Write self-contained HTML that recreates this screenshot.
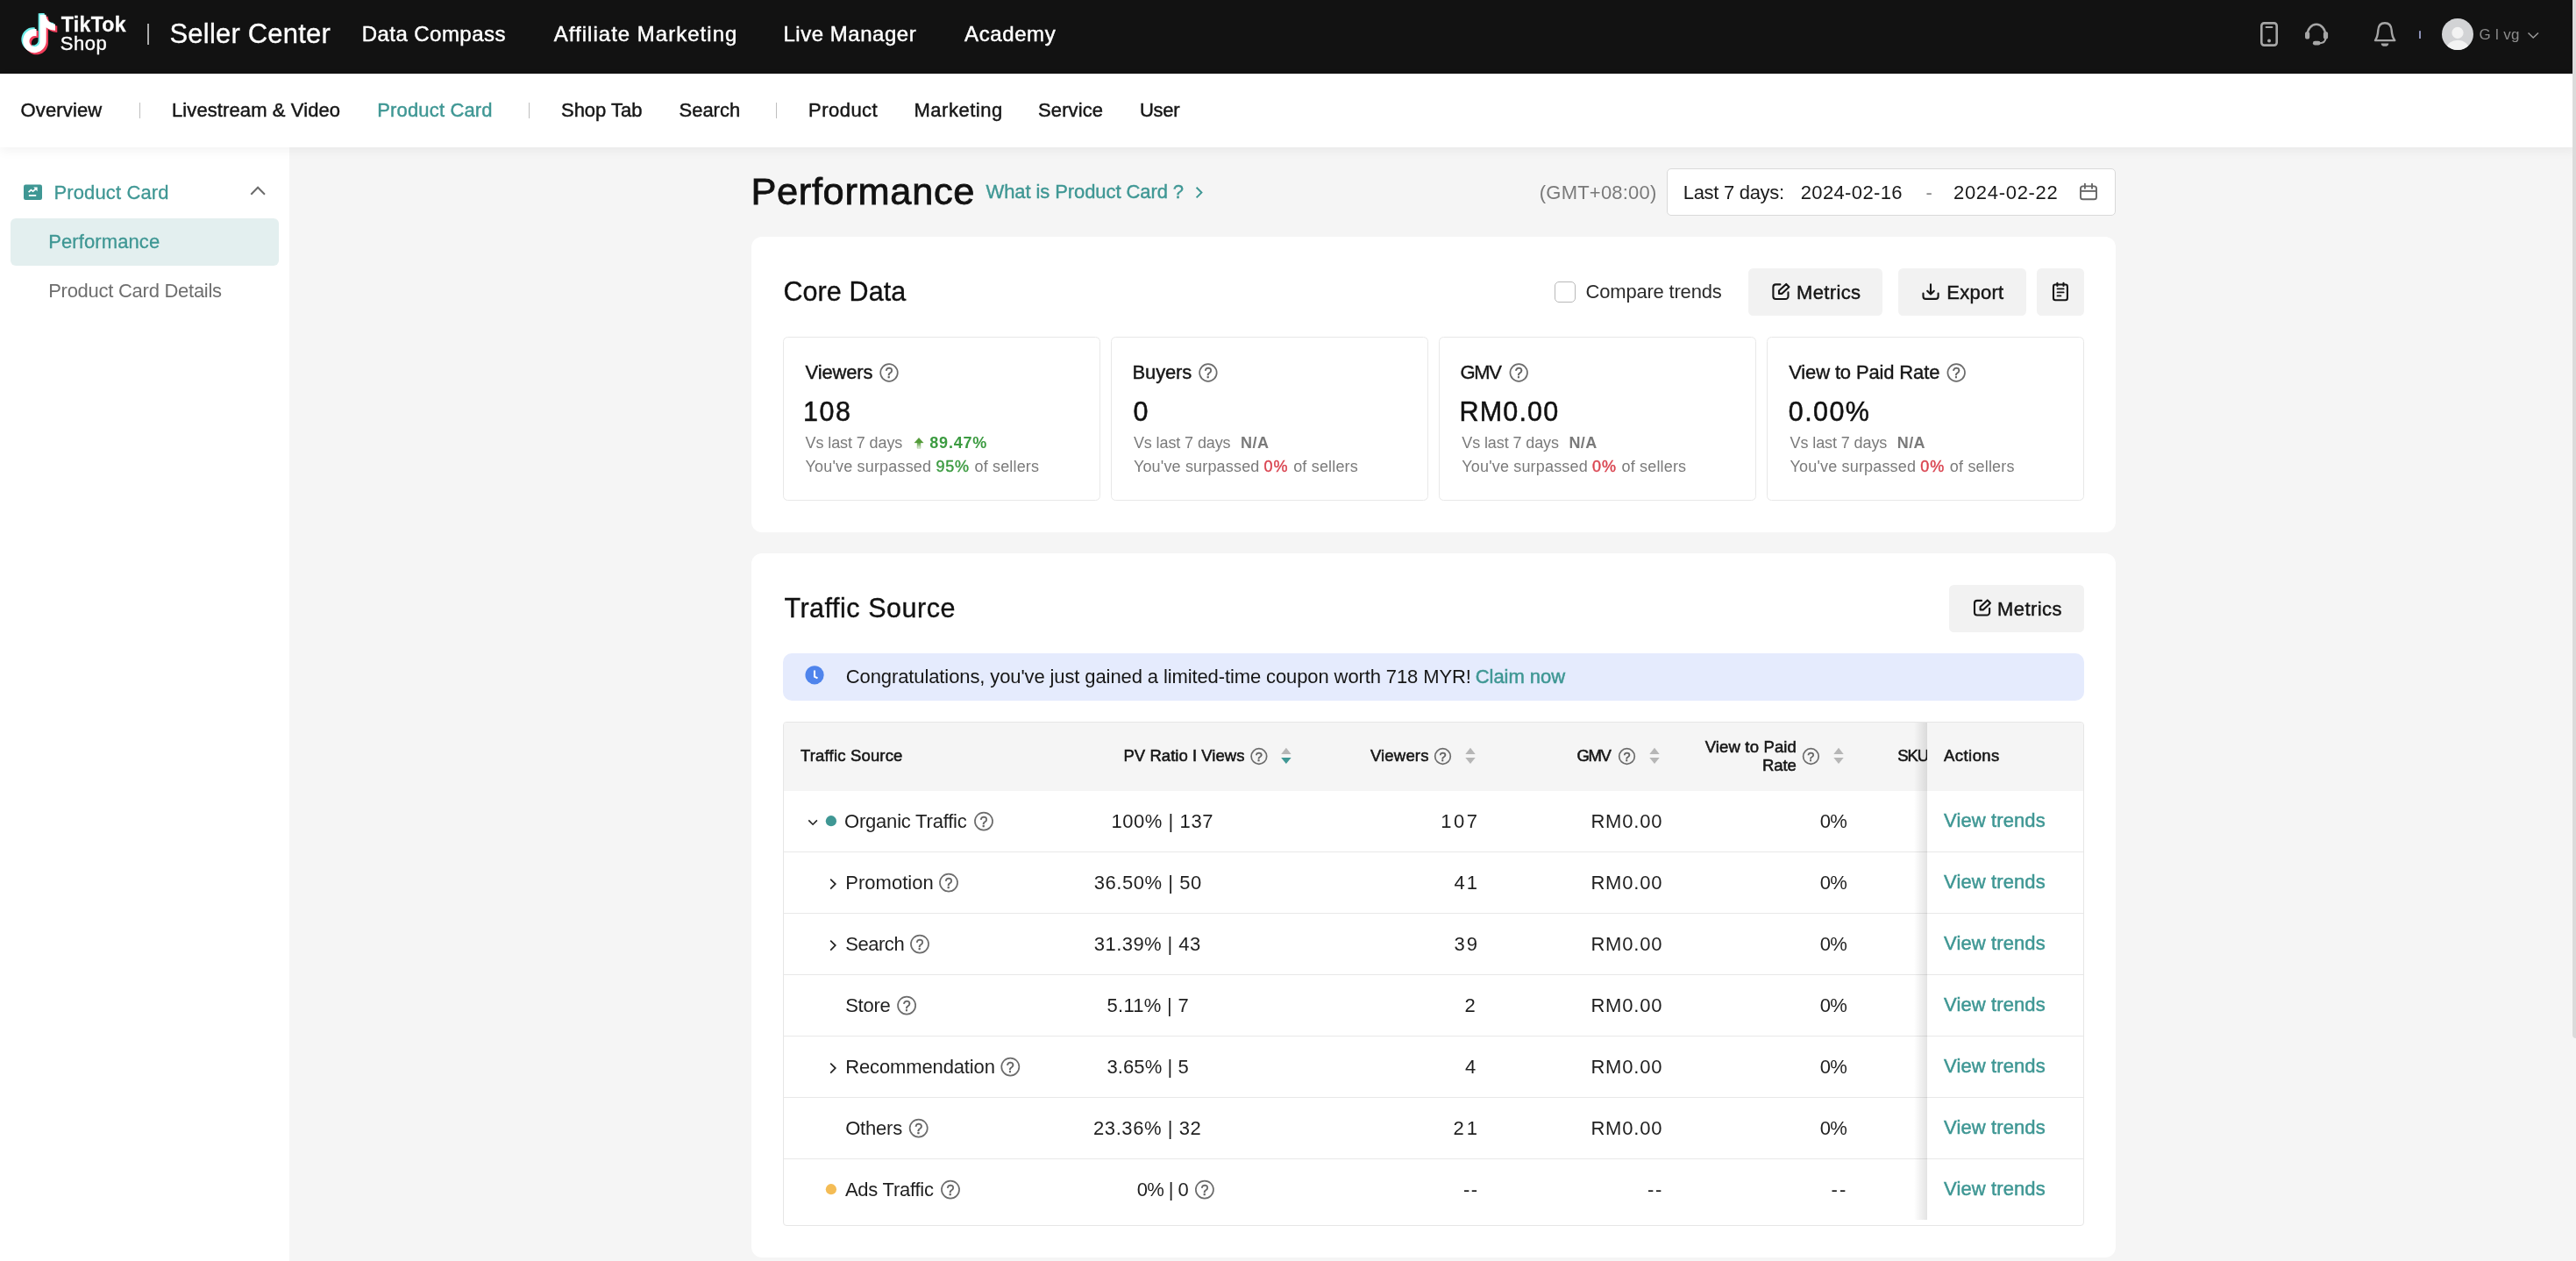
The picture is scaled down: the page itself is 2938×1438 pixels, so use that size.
<!DOCTYPE html>
<html lang="en"><head><meta charset="utf-8"><title>Seller Center - Product Card Performance</title>
<style>
*{box-sizing:border-box;margin:0;padding:0}
html,body{width:2938px;height:1438px;overflow:hidden;background:#f5f5f5;font-family:"Liberation Sans",sans-serif}
.a{position:absolute}
.t{position:absolute;white-space:pre;font-family:"Liberation Sans",sans-serif}
#hdr{left:0;top:0;width:2938px;height:84px;background:#121212}
#sub{left:0;top:84px;width:2938px;height:84px;background:#fff;box-shadow:0 4px 12px rgba(0,0,0,.052);z-index:3}
#side{left:0;top:168px;width:330px;height:1270px;background:#fff}
#sbar{left:2934px;top:0;width:8px;height:1184px;background:#dbdbdb;border-radius:0 0 0 4px;z-index:9}
.card{background:#fff;border-radius:12px}
.box{border:1px solid #e8e8e8;border-radius:5.5px;background:#fff}
.btn{background:#f2f2f2;border-radius:5.5px}
.vd{width:1px;background:#bfbfbf}
svg{position:absolute;overflow:visible}

#texts{position:absolute;left:0;top:0;z-index:5;will-change:transform}
.row{left:894px;width:1482px;height:1px;background:#e8e8e8}
.qq{text-align:center;color:#5e5e5e;font-weight:400;-webkit-text-stroke:0.5px #5e5e5e;z-index:6}

</style></head>
<body>
<div id="hdr" class="a"></div>
<div id="sbar" class="a"></div>
<div id="sub" class="a"></div>
<div id="side" class="a"></div>
<!-- header divider -->
<div class="a" style="left:168px;top:27px;width:2px;height:24px;background:#ababab"></div>
<!-- subnav dividers -->
<div class="a vd" style="left:159px;top:117px;height:18px;z-index:4"></div>
<div class="a vd" style="left:603px;top:117px;height:18px;z-index:4"></div>
<div class="a vd" style="left:885px;top:117px;height:18px;z-index:4"></div>
<!-- sidebar -->
<div class="a" style="left:12px;top:249px;width:306px;height:54px;border-radius:6px;background:#e3efef"></div>
<!-- date box -->
<div class="a" style="left:1901px;top:192px;width:512px;height:54px;border-radius:5px;background:#fff;border:1px solid #d9d9d9"></div>
<!-- core card -->
<div class="a card" style="left:857px;top:270px;width:1556px;height:337px"></div>
<div class="a" style="left:1773px;top:321px;width:24px;height:24px;border:1px solid #b8b8b8;border-radius:5px;background:#fff"></div>
<div class="a btn" style="left:1994px;top:306px;width:153px;height:54px"></div>
<div class="a btn" style="left:2165px;top:306px;width:146px;height:54px"></div>
<div class="a btn" style="left:2323px;top:306px;width:54px;height:54px"></div>
<div class="a box" style="left:893px;top:384px;width:362px;height:187px"></div>
<div class="a box" style="left:1267px;top:384px;width:362px;height:187px"></div>
<div class="a box" style="left:1641px;top:384px;width:362px;height:187px"></div>
<div class="a box" style="left:2015px;top:384px;width:362px;height:187px"></div>
<!-- traffic card -->
<div class="a card" style="left:857px;top:631px;width:1556px;height:803px"></div>
<div class="a btn" style="left:2223px;top:667px;width:154px;height:54px"></div>
<div class="a" style="left:893px;top:745px;width:1484px;height:54px;border-radius:10px;background:#e5ebfd"></div>
<!-- table -->
<div class="a" style="left:893px;top:823px;width:1484px;height:575px;border:1px solid #e6e6e6;border-radius:4px;background:#fff;overflow:hidden">
  <div class="a" style="left:0;top:0;width:1484px;height:78px;background:#f5f5f5"></div>
</div>
<div class="a row" style="top:971px"></div>
<div class="a row" style="top:1041px"></div>
<div class="a row" style="top:1111px"></div>
<div class="a row" style="top:1181px"></div>
<div class="a row" style="top:1251px"></div>
<div class="a row" style="top:1321px"></div>
<!-- fixed col shadow -->
<div class="a" style="left:2183px;top:824px;width:15px;height:567px;background:linear-gradient(to right,rgba(0,0,0,0),rgba(0,0,0,.11))"></div>
<svg class="a" style="left:0;top:0;z-index:4" width="2938" height="1438" viewBox="0 0 2938 1438"><path transform="translate(21.60,15.10) scale(1.765,1.8125)" d="M12.525.02c1.31-.02 2.61-.01 3.91-.02.08 1.53.63 3.09 1.75 4.17 1.12 1.11 2.7 1.62 4.24 1.79v4.03c-1.44-.05-2.89-.35-4.2-.97-.57-.26-1.1-.59-1.62-.93-.01 2.92.01 5.84-.02 8.75-.08 1.4-.54 2.79-1.35 3.94-1.31 1.92-3.58 3.17-5.91 3.21-1.43.08-2.86-.31-4.08-1.03-2.02-1.19-3.44-3.37-3.65-5.71-.02-.5-.03-1-.01-1.49.18-1.9 1.12-3.72 2.58-4.96 1.66-1.44 3.98-2.13 6.15-1.72.02 1.48-.04 2.96-.04 4.44-.99-.32-2.15-.23-3.02.37-.63.41-1.11 1.04-1.36 1.75-.21.51-.15 1.07-.14 1.61.24 1.64 1.82 3.02 3.5 2.87 1.12-.01 2.19-.66 2.77-1.61.19-.33.4-.67.41-1.06.1-1.79.06-3.57.07-5.36.01-4.03-.01-8.05.02-12.07z" fill="#69ece8"/>
<path transform="translate(25.70,18.80) scale(1.765,1.8125)" d="M12.525.02c1.31-.02 2.61-.01 3.91-.02.08 1.53.63 3.09 1.75 4.17 1.12 1.11 2.7 1.62 4.24 1.79v4.03c-1.44-.05-2.89-.35-4.2-.97-.57-.26-1.1-.59-1.62-.93-.01 2.92.01 5.84-.02 8.75-.08 1.4-.54 2.79-1.35 3.94-1.31 1.92-3.58 3.17-5.91 3.21-1.43.08-2.86-.31-4.08-1.03-2.02-1.19-3.44-3.37-3.65-5.71-.02-.5-.03-1-.01-1.49.18-1.9 1.12-3.72 2.58-4.96 1.66-1.44 3.98-2.13 6.15-1.72.02 1.48-.04 2.96-.04 4.44-.99-.32-2.15-.23-3.02.37-.63.41-1.11 1.04-1.36 1.75-.21.51-.15 1.07-.14 1.61.24 1.64 1.82 3.02 3.5 2.87 1.12-.01 2.19-.66 2.77-1.61.19-.33.4-.67.41-1.06.1-1.79.06-3.57.07-5.36.01-4.03-.01-8.05.02-12.07z" fill="#ef3d5a"/>
<path transform="translate(23.40,16.70) scale(1.765,1.8125)" d="M12.525.02c1.31-.02 2.61-.01 3.91-.02.08 1.53.63 3.09 1.75 4.17 1.12 1.11 2.7 1.62 4.24 1.79v4.03c-1.44-.05-2.89-.35-4.2-.97-.57-.26-1.1-.59-1.62-.93-.01 2.92.01 5.84-.02 8.75-.08 1.4-.54 2.79-1.35 3.94-1.31 1.92-3.58 3.17-5.91 3.21-1.43.08-2.86-.31-4.08-1.03-2.02-1.19-3.44-3.37-3.65-5.71-.02-.5-.03-1-.01-1.49.18-1.9 1.12-3.72 2.58-4.96 1.66-1.44 3.98-2.13 6.15-1.72.02 1.48-.04 2.96-.04 4.44-.99-.32-2.15-.23-3.02.37-.63.41-1.11 1.04-1.36 1.75-.21.51-.15 1.07-.14 1.61.24 1.64 1.82 3.02 3.5 2.87 1.12-.01 2.19-.66 2.77-1.61.19-.33.4-.67.41-1.06.1-1.79.06-3.57.07-5.36.01-4.03-.01-8.05.02-12.07z" fill="#ffffff"/>
<rect x="2579.3" y="26.4" width="17.4" height="25.2" rx="3" fill="none" stroke="#a6a6a6" stroke-width="2.6"/>
<line x1="2584.6" y1="30.9" x2="2591.4" y2="30.9" stroke="#a6a6a6" stroke-width="2" stroke-linecap="round"/>
<circle cx="2588" cy="46.5" r="2" fill="#a6a6a6"/>
<path d="M2631.6 40 A10.3 12.2 0 0 1 2652.2 40" fill="none" stroke="#a6a6a6" stroke-width="2.4"/>
<rect x="2629" y="36" width="5.2" height="8.6" rx="2.6" fill="#a6a6a6"/>
<rect x="2649.9" y="36" width="5.2" height="8.6" rx="2.6" fill="#a6a6a6"/>
<path d="M2652.4 43.5 C2652.2 47.6 2650 49.2 2645 49.3" fill="none" stroke="#a6a6a6" stroke-width="2.2"/>
<rect x="2637.9" y="46.8" width="8.6" height="4.8" rx="2.4" fill="#a6a6a6"/>
<path d="M2709 46.1 L2731.3 46.1 C2728.6 42.5 2728 39.5 2727.7 34.6 C2727.3 29.2 2724.4 26.3 2720 26.3 C2715.6 26.3 2712.7 29.2 2712.3 34.6 C2712 39.5 2711.4 42.5 2709 46.1 Z" fill="none" stroke="#a6a6a6" stroke-width="2.4" stroke-linejoin="round"/>
<path d="M2715.7 49.4 L2724.3 49.4 A4.3 3.4 0 0 1 2715.7 49.4 Z" fill="#a6a6a6"/>
<rect x="2759" y="35.2" width="2" height="8.8" fill="#8d92b8"/>
<clipPath id="av"><circle cx="2803" cy="39" r="18"/></clipPath>
<circle cx="2803" cy="39" r="18" fill="#d2d3d5"/>
<circle cx="2803" cy="37.4" r="6.6" fill="#f3f3f3"/>
<ellipse cx="2803" cy="57.5" rx="13.5" ry="11.8" fill="#f3f3f3" clip-path="url(#av)"/>
<path d="M2883.5 37.5 L2889.2 43 L2895 37.5" fill="none" stroke="#9a9a9a" stroke-width="1.5"/>
<rect x="27" y="210.5" width="21" height="17.5" rx="2.2" fill="#3f9794"/>
<path d="M32.6 219.2 L35.4 216.6 L37.6 218.2 L41.4 214.8" fill="none" stroke="#fff" stroke-width="1.8"/>
<path d="M38.2 213.6 L42.6 213.6 L42.6 218.2 Z" fill="#fff"/>
<rect x="32.9" y="222" width="8.3" height="1.8" fill="#fff"/>
<path d="M286.3 221.8 L294.1 213.8 L302 221.8" fill="none" stroke="#6b6b6b" stroke-width="2"/>
<path d="M1364.6 213.8 L1370.4 219.6 L1364.6 225.4" fill="none" stroke="#3f9794" stroke-width="2"/>
<rect x="2373" y="212.4" width="18" height="14.9" rx="2.6" fill="none" stroke="#666" stroke-width="1.9"/>
<line x1="2373" y1="217.9" x2="2391" y2="217.9" stroke="#666" stroke-width="1.9"/>
<line x1="2377.9" y1="209.8" x2="2377.9" y2="214.8" stroke="#666" stroke-width="1.9" stroke-linecap="round"/>
<line x1="2386" y1="209.8" x2="2386" y2="214.8" stroke="#666" stroke-width="1.9" stroke-linecap="round"/>
<g transform="translate(0,0)" fill="none" stroke="#161616" stroke-width="2.1" stroke-linecap="round" stroke-linejoin="round"><path d="M2030.4 324.4 L2025.4 324.4 A3 3 0 0 0 2022.4 327.4 L2022.4 338 A3 3 0 0 0 2025.4 341 L2036.5 341 A3 3 0 0 0 2039.5 338 L2039.5 333.4"/><path d="M2029 331.6 L2037.2 323.9 L2040.4 327.3 L2032.2 334.9 L2029 334.9 Z"/></g>
<g transform="translate(229.6,360.5)" fill="none" stroke="#161616" stroke-width="2.1" stroke-linecap="round" stroke-linejoin="round"><path d="M2030.4 324.4 L2025.4 324.4 A3 3 0 0 0 2022.4 327.4 L2022.4 338 A3 3 0 0 0 2025.4 341 L2036.5 341 A3 3 0 0 0 2039.5 338 L2039.5 333.4"/><path d="M2029 331.6 L2037.2 323.9 L2040.4 327.3 L2032.2 334.9 L2029 334.9 Z"/></g>
<g fill="none" stroke="#161616" stroke-width="2.1" stroke-linecap="round" stroke-linejoin="round"><path d="M2202 324.4 L2202 335.4 M2198.2 331.8 L2202 335.6 L2205.8 331.8"/><path d="M2193.5 334.6 L2193.5 338 A2.9 2.9 0 0 0 2196.4 340.9 L2207.7 340.9 A2.9 2.9 0 0 0 2210.6 338 L2210.6 334.6"/></g>
<g fill="none" stroke="#161616" stroke-width="2.1" stroke-linecap="round" stroke-linejoin="round"><rect x="2342" y="324.5" width="15.9" height="17.7" rx="2.2"/><path d="M2346.4 322.8 L2346.4 326 M2353.5 322.8 L2353.5 326"/><path d="M2346.6 329.4 L2353.6 329.4 M2346.6 333.4 L2353.6 333.4 M2346.6 337.4 L2350.4 337.4" stroke-width="1.9"/></g>
<linearGradient id="ga" x1="0" y1="0" x2="0" y2="1"><stop offset="0" stop-color="#539b39"/><stop offset="0.45" stop-color="#539b39"/><stop offset="1" stop-color="#539b39" stop-opacity="0.1"/></linearGradient>
<path d="M1048 499.2 L1053.2 505 L1050 505 L1050 511.2 L1046.1 511.2 L1046.1 505 L1042.9 505 Z" fill="url(#ga)" stroke="#539b39" stroke-width="0.5" stroke-linejoin="round" stroke-opacity=".6"/>
<circle cx="929.05" cy="769.8" r="10.6" fill="#4f84ec"/>
<path d="M929 764.6 L929 771.6 L932.5 773.4" fill="none" stroke="#fff" stroke-width="2.1"/>
<path d="M1466.9 852.8 L1472.6 859.9 L1461.2 859.9 Z" fill="#b6b6b6"/>
<path d="M1461.2 864.1 L1472.6 864.1 L1466.9 871.1 Z" fill="#3f9794"/>
<path d="M1677.0 852.8 L1682.7 859.9 L1671.3 859.9 Z" fill="#b6b6b6"/>
<path d="M1671.3 864.1 L1682.7 864.1 L1677.0 871.1 Z" fill="#b6b6b6"/>
<path d="M1887.0 852.8 L1892.7 859.9 L1881.3 859.9 Z" fill="#b6b6b6"/>
<path d="M1881.3 864.1 L1892.7 864.1 L1887.0 871.1 Z" fill="#b6b6b6"/>
<path d="M2097.0 852.8 L2102.7 859.9 L2091.3 859.9 Z" fill="#b6b6b6"/>
<path d="M2091.3 864.1 L2102.7 864.1 L2097.0 871.1 Z" fill="#b6b6b6"/>
<path d="M922.3 935.4 L927.1 940.2 L931.9 935.4" fill="none" stroke="#222" stroke-width="1.6"/>
<circle cx="947.9" cy="936.2" r="6.1" fill="#3f9794"/>
<circle cx="947.9" cy="1356.2" r="6.1" fill="#f4bc55"/>
<path d="M947.2 1002.6 L952.8 1008.1 L947.2 1013.6" fill="none" stroke="#222" stroke-width="1.7"/>
<path d="M947.2 1072.6 L952.8 1078.1 L947.2 1083.6" fill="none" stroke="#222" stroke-width="1.7"/>
<path d="M947.2 1212.6 L952.8 1218.1 L947.2 1223.6" fill="none" stroke="#222" stroke-width="1.7"/>
<circle cx="1014.00" cy="425.00" r="9.80" fill="none" stroke="#6c6c6c" stroke-width="1.7"/>
<circle cx="1377.90" cy="425.00" r="9.80" fill="none" stroke="#6c6c6c" stroke-width="1.7"/>
<circle cx="1732.20" cy="425.00" r="9.80" fill="none" stroke="#6c6c6c" stroke-width="1.7"/>
<circle cx="2231.20" cy="425.00" r="9.80" fill="none" stroke="#6c6c6c" stroke-width="1.7"/>
<circle cx="1435.90" cy="862.50" r="8.80" fill="none" stroke="#6c6c6c" stroke-width="1.7"/>
<circle cx="1645.50" cy="862.50" r="8.80" fill="none" stroke="#6c6c6c" stroke-width="1.7"/>
<circle cx="1855.50" cy="862.50" r="8.80" fill="none" stroke="#6c6c6c" stroke-width="1.7"/>
<circle cx="2065.40" cy="862.50" r="8.80" fill="none" stroke="#6c6c6c" stroke-width="1.7"/>
<circle cx="1122.00" cy="936.60" r="10.05" fill="none" stroke="#6c6c6c" stroke-width="1.7"/>
<circle cx="1082.00" cy="1006.60" r="10.05" fill="none" stroke="#6c6c6c" stroke-width="1.7"/>
<circle cx="1049.00" cy="1076.60" r="10.05" fill="none" stroke="#6c6c6c" stroke-width="1.7"/>
<circle cx="1034.10" cy="1146.60" r="10.05" fill="none" stroke="#6c6c6c" stroke-width="1.7"/>
<circle cx="1152.30" cy="1216.60" r="10.05" fill="none" stroke="#6c6c6c" stroke-width="1.7"/>
<circle cx="1047.70" cy="1286.60" r="10.05" fill="none" stroke="#6c6c6c" stroke-width="1.7"/>
<circle cx="1084.00" cy="1356.60" r="10.05" fill="none" stroke="#6c6c6c" stroke-width="1.7"/>
<circle cx="1373.90" cy="1356.60" r="10.05" fill="none" stroke="#6c6c6c" stroke-width="1.7"/></svg>
<div id="texts">
<header aria-label="Seller Center top bar">
<span class="t" style="left:193.50px;top:21px;font-size:31px;line-height:35px;font-weight:400;color:#ffffff;letter-spacing:0.192px;-webkit-text-stroke:0.3px #ffffff;">Seller Center</span>
<span class="t" style="left:412.70px;top:25px;font-size:24px;line-height:27px;font-weight:400;color:#ffffff;letter-spacing:0.452px;-webkit-text-stroke:0.45px #ffffff;">Data Compass</span>
<span class="t" style="left:631.80px;top:25px;font-size:24px;line-height:27px;font-weight:400;color:#ffffff;letter-spacing:1.013px;-webkit-text-stroke:0.45px #ffffff;">Affiliate Marketing</span>
<span class="t" style="left:893.40px;top:25px;font-size:24px;line-height:27px;font-weight:400;color:#ffffff;letter-spacing:0.534px;-webkit-text-stroke:0.45px #ffffff;">Live Manager</span>
<span class="t" style="left:1100.10px;top:25px;font-size:24px;line-height:27px;font-weight:400;color:#ffffff;letter-spacing:0.593px;-webkit-text-stroke:0.45px #ffffff;">Academy</span>
<span class="t" style="left:2827.40px;top:30px;font-size:17px;line-height:19px;font-weight:400;color:#8c8c8c;letter-spacing:0.331px;">G l vg</span>
<span class="t" style="left:69.80px;top:15px;font-size:23px;line-height:26px;font-weight:700;color:#ffffff;letter-spacing:0.339px;-webkit-text-stroke:0.3px #ffffff;">TikTok</span>
<span class="t" style="left:68.80px;top:37px;font-size:22px;line-height:25px;font-weight:400;color:#ffffff;letter-spacing:0.485px;-webkit-text-stroke:0.35px #ffffff;">Shop</span>
</header>
<nav aria-label="Data Compass sections">
<span class="t" style="left:23.50px;top:113px;font-size:22px;line-height:25px;font-weight:400;color:#161616;letter-spacing:0.143px;-webkit-text-stroke:0.45px #161616;">Overview</span>
<span class="t" style="left:196.00px;top:113px;font-size:22px;line-height:25px;font-weight:400;color:#161616;letter-spacing:0.098px;-webkit-text-stroke:0.45px #161616;">Livestream &amp; Video</span>
<span class="t" style="left:640.00px;top:113px;font-size:22px;line-height:25px;font-weight:400;color:#161616;letter-spacing:-0.018px;-webkit-text-stroke:0.45px #161616;">Shop Tab</span>
<span class="t" style="left:774.50px;top:113px;font-size:22px;line-height:25px;font-weight:400;color:#161616;letter-spacing:-0.014px;-webkit-text-stroke:0.45px #161616;">Search</span>
<span class="t" style="left:922.00px;top:113px;font-size:22px;line-height:25px;font-weight:400;color:#161616;letter-spacing:0.482px;-webkit-text-stroke:0.45px #161616;">Product</span>
<span class="t" style="left:1042.50px;top:113px;font-size:22px;line-height:25px;font-weight:400;color:#161616;letter-spacing:0.518px;-webkit-text-stroke:0.45px #161616;">Marketing</span>
<span class="t" style="left:1184.00px;top:113px;font-size:22px;line-height:25px;font-weight:400;color:#161616;letter-spacing:0.113px;-webkit-text-stroke:0.45px #161616;">Service</span>
<span class="t" style="left:1300.00px;top:113px;font-size:22px;line-height:25px;font-weight:400;color:#161616;letter-spacing:-0.274px;-webkit-text-stroke:0.45px #161616;">User</span>
<span class="t" style="left:430.30px;top:113px;font-size:22px;line-height:25px;font-weight:400;color:#3f9794;letter-spacing:0.147px;-webkit-text-stroke:0.45px #3f9794;">Product Card</span>
</nav>
<aside aria-label="Product Card menu">
<span class="t" style="left:61.40px;top:207px;font-size:22px;line-height:25px;font-weight:400;color:#3f9794;letter-spacing:0.138px;-webkit-text-stroke:0.3px #3f9794;">Product Card</span>
<span class="t" style="left:55.20px;top:263px;font-size:22px;line-height:25px;font-weight:400;color:#3f9794;letter-spacing:0.109px;-webkit-text-stroke:0.3px #3f9794;">Performance</span>
<span class="t" style="left:55.20px;top:319px;font-size:22px;line-height:25px;font-weight:400;color:#6e6e6e;letter-spacing:-0.267px;">Product Card Details</span>
</aside>
<main>
<section aria-label="Performance title and date range">
<span class="t" style="left:856.40px;top:194px;font-size:43.4px;line-height:48px;font-weight:400;color:#111;letter-spacing:0.664px;-webkit-text-stroke:0.8px #111;">Performance</span>
<span class="t" style="left:1124.50px;top:206px;font-size:22px;line-height:25px;font-weight:400;color:#3f9794;letter-spacing:-0.090px;-webkit-text-stroke:0.4px #3f9794;">What is Product Card ?</span>
<span class="t" style="left:1755.80px;top:207px;font-size:22px;line-height:25px;font-weight:400;color:#7a7a7a;letter-spacing:0.210px;">(GMT+08:00)</span>
<span class="t" style="left:1919.70px;top:207px;font-size:22px;line-height:25px;font-weight:400;color:#1a1a1a;letter-spacing:-0.292px;">Last 7 days:</span>
<span class="t" style="left:2053.70px;top:207px;font-size:22px;line-height:25px;font-weight:400;color:#1a1a1a;letter-spacing:0.367px;">2024-02-16</span>
<span class="t" style="left:2196.50px;top:207px;font-size:22px;line-height:25px;font-weight:400;color:#8a8a8a;letter-spacing:-0.500px;">-</span>
<span class="t" style="left:2228.00px;top:207px;font-size:22px;line-height:25px;font-weight:400;color:#1a1a1a;letter-spacing:0.689px;">2024-02-22</span>
</section>
<section aria-label="Core Data">
<span class="t" style="left:893.40px;top:315px;font-size:30.5px;line-height:34px;font-weight:400;color:#111;letter-spacing:0.107px;-webkit-text-stroke:0.35px #111;">Core Data</span>
<span class="t" style="left:1808.60px;top:320px;font-size:22px;line-height:25px;font-weight:400;color:#2b2b2b;letter-spacing:-0.203px;">Compare trends</span>
<span class="t" style="left:2049.00px;top:321px;font-size:22px;line-height:25px;font-weight:400;color:#161616;letter-spacing:0.352px;-webkit-text-stroke:0.45px #161616;">Metrics</span>
<span class="t" style="left:2220.30px;top:321px;font-size:22px;line-height:25px;font-weight:400;color:#161616;letter-spacing:0.246px;-webkit-text-stroke:0.45px #161616;">Export</span>
<span class="t" style="left:918.60px;top:412px;font-size:22px;line-height:25px;font-weight:400;color:#161616;letter-spacing:-0.158px;-webkit-text-stroke:0.4px #161616;">Viewers</span>
<span class="t" style="left:1291.50px;top:412px;font-size:22px;line-height:25px;font-weight:400;color:#161616;letter-spacing:-0.134px;-webkit-text-stroke:0.4px #161616;">Buyers</span>
<span class="t" style="left:1665.60px;top:412px;font-size:22px;line-height:25px;font-weight:400;color:#161616;letter-spacing:-1.419px;-webkit-text-stroke:0.4px #161616;">GMV</span>
<span class="t" style="left:2040.20px;top:412px;font-size:22px;line-height:25px;font-weight:400;color:#161616;letter-spacing:-0.140px;-webkit-text-stroke:0.4px #161616;">View to Paid Rate</span>
<span class="t" style="left:916.00px;top:452px;font-size:30.5px;line-height:34px;font-weight:400;color:#111;letter-spacing:1.537px;-webkit-text-stroke:0.5px #111;">108</span>
<span class="t" style="left:1292.50px;top:452px;font-size:30.5px;line-height:34px;font-weight:400;color:#111;letter-spacing:1.700px;-webkit-text-stroke:0.5px #111;">0</span>
<span class="t" style="left:1664.60px;top:452px;font-size:30.5px;line-height:34px;font-weight:400;color:#111;letter-spacing:1.154px;-webkit-text-stroke:0.5px #111;">RM0.00</span>
<span class="t" style="left:2039.80px;top:452px;font-size:30.5px;line-height:34px;font-weight:400;color:#111;letter-spacing:1.410px;-webkit-text-stroke:0.5px #111;">0.00%</span>
<span class="t" style="left:918.60px;top:495px;font-size:18px;line-height:20px;font-weight:400;color:#7a7a7a;letter-spacing:-0.104px;">Vs last 7 days</span>
<span class="t" style="left:918.60px;top:522px;font-size:18px;line-height:20px;font-weight:400;color:#7a7a7a;letter-spacing:0.169px;">You&#x27;ve surpassed</span>
<span class="t" style="left:1292.93px;top:495px;font-size:18px;line-height:20px;font-weight:400;color:#7a7a7a;letter-spacing:-0.104px;">Vs last 7 days</span>
<span class="t" style="left:1292.93px;top:522px;font-size:18px;line-height:20px;font-weight:400;color:#7a7a7a;letter-spacing:0.169px;">You&#x27;ve surpassed</span>
<span class="t" style="left:1415.10px;top:495px;font-size:18px;line-height:20px;font-weight:700;color:#7a7a7a;letter-spacing:0.400px;">N/A</span>
<span class="t" style="left:1441.60px;top:522px;font-size:18px;line-height:20px;font-weight:400;color:#d9434f;letter-spacing:0.989px;-webkit-text-stroke:0.4px #d9434f;">0%</span>
<span class="t" style="left:1475.20px;top:522px;font-size:18px;line-height:20px;font-weight:400;color:#7a7a7a;letter-spacing:0.175px;">of sellers</span>
<span class="t" style="left:1667.26px;top:495px;font-size:18px;line-height:20px;font-weight:400;color:#7a7a7a;letter-spacing:-0.104px;">Vs last 7 days</span>
<span class="t" style="left:1667.26px;top:522px;font-size:18px;line-height:20px;font-weight:400;color:#7a7a7a;letter-spacing:0.169px;">You&#x27;ve surpassed</span>
<span class="t" style="left:1789.43px;top:495px;font-size:18px;line-height:20px;font-weight:700;color:#7a7a7a;letter-spacing:0.400px;">N/A</span>
<span class="t" style="left:1815.93px;top:522px;font-size:18px;line-height:20px;font-weight:400;color:#d9434f;letter-spacing:0.989px;-webkit-text-stroke:0.4px #d9434f;">0%</span>
<span class="t" style="left:1849.53px;top:522px;font-size:18px;line-height:20px;font-weight:400;color:#7a7a7a;letter-spacing:0.175px;">of sellers</span>
<span class="t" style="left:2041.59px;top:495px;font-size:18px;line-height:20px;font-weight:400;color:#7a7a7a;letter-spacing:-0.104px;">Vs last 7 days</span>
<span class="t" style="left:2041.59px;top:522px;font-size:18px;line-height:20px;font-weight:400;color:#7a7a7a;letter-spacing:0.169px;">You&#x27;ve surpassed</span>
<span class="t" style="left:2163.76px;top:495px;font-size:18px;line-height:20px;font-weight:700;color:#7a7a7a;letter-spacing:0.400px;">N/A</span>
<span class="t" style="left:2190.26px;top:522px;font-size:18px;line-height:20px;font-weight:400;color:#d9434f;letter-spacing:0.989px;-webkit-text-stroke:0.4px #d9434f;">0%</span>
<span class="t" style="left:2223.86px;top:522px;font-size:18px;line-height:20px;font-weight:400;color:#7a7a7a;letter-spacing:0.175px;">of sellers</span>
<span class="t" style="left:1060.30px;top:495px;font-size:18px;line-height:20px;font-weight:700;color:#3c9b41;letter-spacing:0.791px;">89.47%</span>
<span class="t" style="left:1067.40px;top:522px;font-size:18px;line-height:20px;font-weight:400;color:#3c9b41;letter-spacing:0.839px;-webkit-text-stroke:0.4px #3c9b41;">95%</span>
<span class="t" style="left:1111.50px;top:522px;font-size:18px;line-height:20px;font-weight:400;color:#7a7a7a;letter-spacing:0.164px;">of sellers</span>
</section>
<section aria-label="Traffic Source">
<span class="t" style="left:894.40px;top:676px;font-size:30.5px;line-height:34px;font-weight:400;color:#111;letter-spacing:0.532px;-webkit-text-stroke:0.35px #111;">Traffic Source</span>
<span class="t" style="left:2278.00px;top:682px;font-size:22px;line-height:25px;font-weight:400;color:#161616;letter-spacing:0.419px;-webkit-text-stroke:0.45px #161616;">Metrics</span>
<span class="t" style="left:964.80px;top:759px;font-size:22px;line-height:25px;font-weight:400;color:#161616;letter-spacing:-0.108px;">Congratulations, you&#x27;ve just gained a limited-time coupon worth 718 MYR!</span>
<span class="t" style="left:1682.70px;top:759px;font-size:22px;line-height:25px;font-weight:400;color:#3f9794;letter-spacing:-0.038px;-webkit-text-stroke:0.5px #3f9794;">Claim now</span>
<span class="t" style="left:913.00px;top:851px;font-size:18.5px;line-height:21px;font-weight:400;color:#161616;letter-spacing:0.174px;-webkit-text-stroke:0.55px #161616;">Traffic Source</span>
<span class="t" style="left:1281.50px;top:851px;font-size:18.5px;line-height:21px;font-weight:400;color:#161616;letter-spacing:0.034px;-webkit-text-stroke:0.55px #161616;">PV Ratio I Views</span>
<span class="t" style="left:1562.90px;top:851px;font-size:18.5px;line-height:21px;font-weight:400;color:#161616;letter-spacing:0.181px;-webkit-text-stroke:0.55px #161616;">Viewers</span>
<span class="t" style="left:1798.60px;top:851px;font-size:18.5px;line-height:21px;font-weight:400;color:#161616;letter-spacing:-1.500px;-webkit-text-stroke:0.55px #161616;">GMV</span>
<span class="t" style="left:1944.70px;top:841px;font-size:18.5px;line-height:21px;font-weight:400;color:#161616;letter-spacing:0.154px;-webkit-text-stroke:0.55px #161616;">View to Paid</span>
<span class="t" style="left:2010.00px;top:862px;font-size:18.5px;line-height:21px;font-weight:400;color:#161616;letter-spacing:-0.063px;-webkit-text-stroke:0.55px #161616;">Rate</span>
<span class="t" style="left:2164.20px;top:851px;font-size:18.5px;line-height:21px;font-weight:400;color:#161616;letter-spacing:-1.039px;-webkit-text-stroke:0.55px #161616;width:33.80px;overflow:hidden;">SKU</span>
<span class="t" style="left:2217.00px;top:851px;font-size:18.5px;line-height:21px;font-weight:400;color:#161616;letter-spacing:0.447px;-webkit-text-stroke:0.55px #161616;">Actions</span>
<span class="t" style="left:963.00px;top:924px;font-size:22px;line-height:25px;font-weight:400;color:#1f1f1f;letter-spacing:-0.203px;">Organic Traffic</span>
<span class="t" style="left:1267.40px;top:924px;font-size:22px;line-height:25px;font-weight:400;color:#1f1f1f;letter-spacing:0.569px;">100% | 137</span>
<span class="t" style="left:1643.30px;top:924px;font-size:22px;line-height:25px;font-weight:400;color:#1f1f1f;letter-spacing:2.515px;">107</span>
<span class="t" style="left:1814.40px;top:924px;font-size:22px;line-height:25px;font-weight:400;color:#1f1f1f;letter-spacing:0.801px;">RM0.00</span>
<span class="t" style="left:2075.80px;top:924px;font-size:22px;line-height:25px;font-weight:400;color:#1f1f1f;letter-spacing:-0.735px;">0%</span>
<span class="t" style="left:2217.00px;top:923px;font-size:22px;line-height:25px;font-weight:400;color:#3f9794;letter-spacing:0.116px;-webkit-text-stroke:0.5px #3f9794;">View trends</span>
<span class="t" style="left:964.30px;top:994px;font-size:22px;line-height:25px;font-weight:400;color:#1f1f1f;letter-spacing:0.008px;">Promotion</span>
<span class="t" style="left:1247.80px;top:994px;font-size:22px;line-height:25px;font-weight:400;color:#1f1f1f;letter-spacing:0.541px;">36.50% | 50</span>
<span class="t" style="left:1658.40px;top:994px;font-size:22px;line-height:25px;font-weight:400;color:#1f1f1f;letter-spacing:2.165px;">41</span>
<span class="t" style="left:1814.40px;top:994px;font-size:22px;line-height:25px;font-weight:400;color:#1f1f1f;letter-spacing:0.801px;">RM0.00</span>
<span class="t" style="left:2075.80px;top:994px;font-size:22px;line-height:25px;font-weight:400;color:#1f1f1f;letter-spacing:-0.735px;">0%</span>
<span class="t" style="left:2217.00px;top:993px;font-size:22px;line-height:25px;font-weight:400;color:#3f9794;letter-spacing:0.116px;-webkit-text-stroke:0.5px #3f9794;">View trends</span>
<span class="t" style="left:964.30px;top:1064px;font-size:22px;line-height:25px;font-weight:400;color:#1f1f1f;letter-spacing:-0.474px;">Search</span>
<span class="t" style="left:1247.80px;top:1064px;font-size:22px;line-height:25px;font-weight:400;color:#1f1f1f;letter-spacing:0.441px;">31.39% | 43</span>
<span class="t" style="left:1658.40px;top:1064px;font-size:22px;line-height:25px;font-weight:400;color:#1f1f1f;letter-spacing:2.165px;">39</span>
<span class="t" style="left:1814.40px;top:1064px;font-size:22px;line-height:25px;font-weight:400;color:#1f1f1f;letter-spacing:0.801px;">RM0.00</span>
<span class="t" style="left:2075.80px;top:1064px;font-size:22px;line-height:25px;font-weight:400;color:#1f1f1f;letter-spacing:-0.735px;">0%</span>
<span class="t" style="left:2217.00px;top:1063px;font-size:22px;line-height:25px;font-weight:400;color:#3f9794;letter-spacing:0.116px;-webkit-text-stroke:0.5px #3f9794;">View trends</span>
<span class="t" style="left:964.20px;top:1134px;font-size:22px;line-height:25px;font-weight:400;color:#1f1f1f;letter-spacing:-0.262px;">Store</span>
<span class="t" style="left:1262.50px;top:1134px;font-size:22px;line-height:25px;font-weight:400;color:#1f1f1f;letter-spacing:0.289px;">5.11% | 7</span>
<span class="t" style="left:1670.50px;top:1134px;font-size:22px;line-height:25px;font-weight:400;color:#1f1f1f;letter-spacing:2.300px;">2</span>
<span class="t" style="left:1814.40px;top:1134px;font-size:22px;line-height:25px;font-weight:400;color:#1f1f1f;letter-spacing:0.801px;">RM0.00</span>
<span class="t" style="left:2075.80px;top:1134px;font-size:22px;line-height:25px;font-weight:400;color:#1f1f1f;letter-spacing:-0.735px;">0%</span>
<span class="t" style="left:2217.00px;top:1133px;font-size:22px;line-height:25px;font-weight:400;color:#3f9794;letter-spacing:0.116px;-webkit-text-stroke:0.5px #3f9794;">View trends</span>
<span class="t" style="left:964.20px;top:1204px;font-size:22px;line-height:25px;font-weight:400;color:#1f1f1f;letter-spacing:-0.130px;">Recommendation</span>
<span class="t" style="left:1262.50px;top:1204px;font-size:22px;line-height:25px;font-weight:400;color:#1f1f1f;letter-spacing:0.085px;">3.65% | 5</span>
<span class="t" style="left:1671.00px;top:1204px;font-size:22px;line-height:25px;font-weight:400;color:#1f1f1f;letter-spacing:1.800px;">4</span>
<span class="t" style="left:1814.40px;top:1204px;font-size:22px;line-height:25px;font-weight:400;color:#1f1f1f;letter-spacing:0.801px;">RM0.00</span>
<span class="t" style="left:2075.80px;top:1204px;font-size:22px;line-height:25px;font-weight:400;color:#1f1f1f;letter-spacing:-0.735px;">0%</span>
<span class="t" style="left:2217.00px;top:1203px;font-size:22px;line-height:25px;font-weight:400;color:#3f9794;letter-spacing:0.116px;-webkit-text-stroke:0.5px #3f9794;">View trends</span>
<span class="t" style="left:964.20px;top:1274px;font-size:22px;line-height:25px;font-weight:400;color:#1f1f1f;letter-spacing:-0.204px;">Others</span>
<span class="t" style="left:1247.00px;top:1274px;font-size:22px;line-height:25px;font-weight:400;color:#1f1f1f;letter-spacing:0.581px;">23.36% | 32</span>
<span class="t" style="left:1657.40px;top:1274px;font-size:22px;line-height:25px;font-weight:400;color:#1f1f1f;letter-spacing:3.165px;">21</span>
<span class="t" style="left:1814.40px;top:1274px;font-size:22px;line-height:25px;font-weight:400;color:#1f1f1f;letter-spacing:0.801px;">RM0.00</span>
<span class="t" style="left:2075.80px;top:1274px;font-size:22px;line-height:25px;font-weight:400;color:#1f1f1f;letter-spacing:-0.735px;">0%</span>
<span class="t" style="left:2217.00px;top:1273px;font-size:22px;line-height:25px;font-weight:400;color:#3f9794;letter-spacing:0.116px;-webkit-text-stroke:0.5px #3f9794;">View trends</span>
<span class="t" style="left:963.90px;top:1344px;font-size:22px;line-height:25px;font-weight:400;color:#1f1f1f;letter-spacing:-0.242px;">Ads Traffic</span>
<span class="t" style="left:1296.70px;top:1344px;font-size:22px;line-height:25px;font-weight:400;color:#1f1f1f;letter-spacing:-0.587px;">0% | 0</span>
<span class="t" style="left:1669.00px;top:1344px;font-size:22px;line-height:25px;font-weight:400;color:#1f1f1f;letter-spacing:1.474px;">--</span>
<span class="t" style="left:1879.00px;top:1344px;font-size:22px;line-height:25px;font-weight:400;color:#1f1f1f;letter-spacing:1.674px;">--</span>
<span class="t" style="left:2088.40px;top:1344px;font-size:22px;line-height:25px;font-weight:400;color:#1f1f1f;letter-spacing:2.274px;">--</span>
<span class="t" style="left:2217.00px;top:1343px;font-size:22px;line-height:25px;font-weight:400;color:#3f9794;letter-spacing:0.116px;-webkit-text-stroke:0.5px #3f9794;">View trends</span>
</section>
</main>
<span class="t qq" style="left:1004.00px;top:418.00px;width:20px;font-size:16px;line-height:16px">?</span>
<span class="t qq" style="left:1367.90px;top:418.00px;width:20px;font-size:16px;line-height:16px">?</span>
<span class="t qq" style="left:1722.20px;top:418.00px;width:20px;font-size:16px;line-height:16px">?</span>
<span class="t qq" style="left:2221.20px;top:418.00px;width:20px;font-size:16px;line-height:16px">?</span>
<span class="t qq" style="left:1425.90px;top:856.25px;width:20px;font-size:14.5px;line-height:14.5px">?</span>
<span class="t qq" style="left:1635.50px;top:856.25px;width:20px;font-size:14.5px;line-height:14.5px">?</span>
<span class="t qq" style="left:1845.50px;top:856.25px;width:20px;font-size:14.5px;line-height:14.5px">?</span>
<span class="t qq" style="left:2055.40px;top:856.25px;width:20px;font-size:14.5px;line-height:14.5px">?</span>
<span class="t qq" style="left:1112.00px;top:929.60px;width:20px;font-size:16px;line-height:16px">?</span>
<span class="t qq" style="left:1072.00px;top:999.60px;width:20px;font-size:16px;line-height:16px">?</span>
<span class="t qq" style="left:1039.00px;top:1069.60px;width:20px;font-size:16px;line-height:16px">?</span>
<span class="t qq" style="left:1024.10px;top:1139.60px;width:20px;font-size:16px;line-height:16px">?</span>
<span class="t qq" style="left:1142.30px;top:1209.60px;width:20px;font-size:16px;line-height:16px">?</span>
<span class="t qq" style="left:1037.70px;top:1279.60px;width:20px;font-size:16px;line-height:16px">?</span>
<span class="t qq" style="left:1074.00px;top:1349.60px;width:20px;font-size:16px;line-height:16px">?</span>
<span class="t qq" style="left:1363.90px;top:1349.60px;width:20px;font-size:16px;line-height:16px">?</span>
</div>
</body></html>
